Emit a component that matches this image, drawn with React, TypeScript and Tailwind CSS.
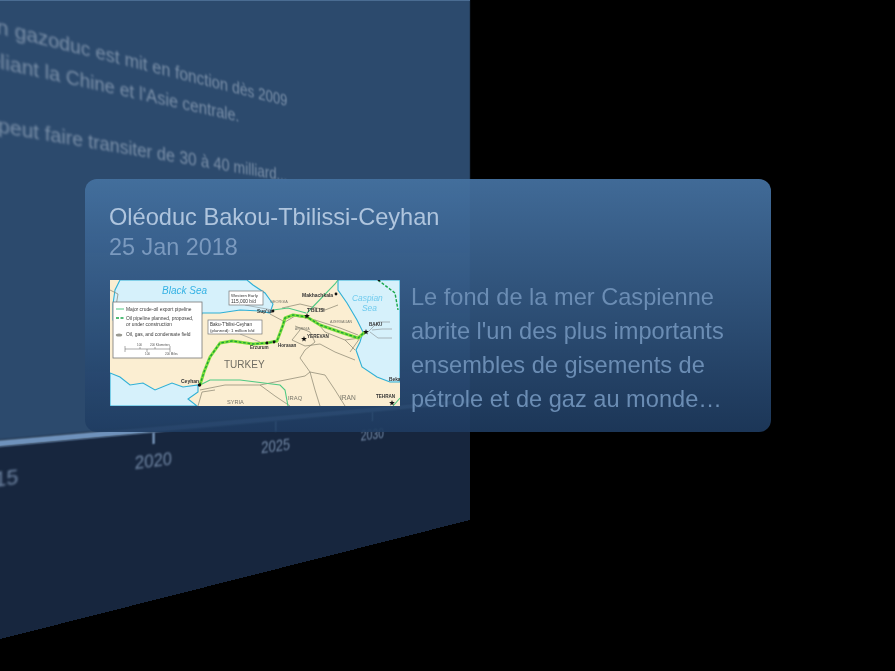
const coast = "#2fb0d6";
const border = "#86836f";

const route = "M90 105 L94 92 L100 77 L110 63 L122 61 L143 64 L157 63 L167 61 L173 45 L175 38 L183 35 L197 37 L210 45 L230 52 L248 58 L255 52";

function Star({ x, y, r = 3 }: { x: number; y: number; r?: number }) {
  const pts = Array.from({ length: 10 }, (_, i) => {
    const a = -Math.PI / 2 + (i * Math.PI) / 5;
    const d = i % 2 === 0 ? r : r * 0.42;
    return `${(x + d * Math.cos(a)).toFixed(2)},${(y + d * Math.sin(a)).toFixed(2)}`;
  }).join(" ");
  return <polygon points={pts} fill="#111" />;
}

function MapPicture() {
  const sans = "'Liberation Sans', Arial, sans-serif";
  const label = (x: number, y: number, t: string, size = 4.9, fill = "#3a3a3a", extra: Record<string, unknown> = {}) => (
    <text x={x} y={y} fontSize={size} fill={fill} fontFamily={sans} {...extra}>{t}</text>
  );
  return (
    <svg viewBox="0 0 290 126" className="block h-[126px] w-[290px] shrink-0 blur-[0.75px]">
      <rect width="290" height="126" fill="#fbeed2" />
      {/* Black Sea */}
      <path d="M10 0 L5 10 L3 24 L3 40 L90 40 L92 33 L110 33 L130 30 L150 31 L160 33 L163 24 L155 13 L143 5 L137 0 Z" fill="#d6f1fb" stroke={coast} strokeWidth="1.1" />
      {/* Mediterranean */}
      <path d="M0 93 L10 97 L20 105 L33 103 L45 110 L62 103 L73 107 L88 105 L88 112 L78 119 L87 126 L0 126 Z" fill="#d6f1fb" stroke={coast} strokeWidth="1.1" />
      {/* Caspian */}
      <path d="M228 0 L228 10 L237 23 L247 40 L253 52 L250 62 L246 70 L252 87 L267 97 L280 102 L290 102 L290 0 Z" fill="#d6f1fb" stroke={coast} strokeWidth="1.1" />
      {/* Borders */}
      <g fill="none" stroke={border} strokeWidth="0.7">
        <path d="M0 10 L8 14 L6 26" />
        <path d="M160 34 L175 42 L185 36 L196 38 L205 40 L230 48 L248 55" />
        <path d="M172 28 L190 24 L215 30 L228 25" />
        <path d="M185 46 L200 52 L205 62 L195 70 L190 78 L200 92 L205 110 L210 126" />
        <path d="M190 50 L182 60 L195 66 L210 64 L225 72 L245 80" />
        <path d="M205 40 L215 52 L235 60 L245 70" />
        <path d="M90 110 L115 105 L150 105 L175 100 L195 96 L200 92" />
        <path d="M88 126 L92 112 L105 110" />
        <path d="M150 105 L165 116 L180 126" />
        <path d="M200 92 L215 95 L225 110 L235 126" />
        <path d="M235 60 L250 58 L240 72" />
      </g>
      {/* Existing pipelines */}
      <g fill="none" stroke="#4fc983" strokeWidth="1.1">
        <path d="M90 105 L100 100 L130 100 L170 105 L175 110 L178 126" />
        <path d="M163 30 L178 28 L196 33" />
        <path d="M197 33 L225 4 L228 0" />
        <path d="M283 126 L290 118" />
      </g>
      <path d="M268 0 L285 13 L288 30" fill="none" stroke="#18a84c" strokeWidth="1.4" strokeDasharray="3 1.6" />
      {/* Planned pipeline */}
      <path d={route} fill="none" stroke="#7fe03a" strokeWidth="3" strokeLinejoin="round" />
      <path d={route} fill="none" stroke="#1a9f3a" strokeWidth="1.3" strokeDasharray="2.6 1.8" />
      {/* Places */}
      <g fill="#111">
        <circle cx="89.5" cy="105" r="1.7" />
        <circle cx="164" cy="62" r="1.4" />
        <circle cx="157" cy="63" r="1.4" />
        <circle cx="163" cy="31" r="1.4" />
        <circle cx="226" cy="14" r="1.4" />
        <circle cx="269" cy="0" r="1.4" />
      </g>
      <Star x={197} y={36} />
      <Star x={194} y={59} />
      <Star x={256} y={52} />
      <Star x={282} y={123} />
      <g fill="none" stroke="#777" strokeWidth="0.5">
        <path d="M258 52 L268 42 L280 42 M262 50 L272 49 L282 49 M260 52 L268 58 L282 58" />
        <path d="M135 25 L162 30" />
        <path d="M130 54 L150 62" />
      </g>
      {/* Sea and country names */}
      {label(52, 14, "Black Sea", 10, "#35b2e4", { fontStyle: "italic" })}
      {label(242, 21, "Caspian", 8.4, "#6fcbee", { fontStyle: "italic" })}
      {label(252, 31, "Sea", 8.4, "#6fcbee", { fontStyle: "italic" })}
      {label(114, 88, "TURKEY", 10, "#6f6d63")}
      {label(117, 124, "SYRIA", 5.6, "#77756a")}
      {label(178, 120, "IRAQ", 5.8, "#77756a")}
      {label(230, 120, "IRAN", 6.6, "#77756a")}
      {label(160, 23, "GEORGIA", 3.8, "#77756a")}
      {label(220, 43, "AZERBAIJAN", 3.6, "#77756a")}
      {label(185, 50, "ARMENIA", 3.2, "#77756a")}
      {/* Cities */}
      {label(197, 32, "T'BILISI", 4.8, "#333", { fontWeight: 700 })}
      {label(197, 58, "YEREVAN", 4.6, "#333", { fontWeight: 700 })}
      {label(259, 46, "BAKU", 4.6, "#333", { fontWeight: 700 })}
      {label(192, 17, "Makhachkala", 5, "#333", { fontWeight: 700 })}
      {label(147, 33, "Sup'sa", 4.8, "#333", { fontWeight: 700 })}
      {label(140, 69, "Erzurum", 4.6, "#333", { fontWeight: 700 })}
      {label(168, 67, "Horasan", 4.6, "#333", { fontWeight: 700 })}
      {label(71, 103, "Ceyhan", 5, "#333", { fontWeight: 700 })}
      {label(279, 101, "Beka", 4.8, "#333", { fontWeight: 700 })}
      {label(266, 118, "TEHRAN", 4.6, "#333", { fontWeight: 700 })}
      {/* Callouts */}
      <rect x="119" y="11" width="34" height="14" fill="#fff" stroke="#777" strokeWidth="0.7" />
      {label(121, 17, "Western Early", 4.3, "#333")}
      {label(121, 23, "115,000 b/d", 4.8, "#333")}
      <rect x="98" y="40" width="54" height="14" fill="#fff" stroke="#777" strokeWidth="0.7" />
      {label(100, 46, "Baku-T'bilisi-Ceyhan", 4.6, "#333")}
      {label(100, 52, "(planned): 1 million b/d", 4.4, "#333")}
      {/* Legend */}
      <rect x="3" y="22" width="89" height="56" fill="#fff" stroke="#777" strokeWidth="0.8" />
      <path d="M6 29 H14" stroke="#4fc983" strokeWidth="1" />
      <path d="M6 38 H14" stroke="#18a84c" strokeWidth="1.4" strokeDasharray="3 1.5" />
      <ellipse cx="9" cy="55" rx="3.2" ry="1.5" fill="#9a9a92" />
      {label(16, 31, "Major crude-oil export pipeline")}
      {label(16, 40, "Oil pipeline planned, proposed,")}
      {label(16, 46, "or under construction")}
      {label(16, 56, "Oil, gas, and condensate field")}
      <path d="M15 69 H60 M15 66 V72 M30 67 V69 M45 67 V69 M60 66 V72 M37 69 V72" stroke="#555" strokeWidth="0.5" fill="none" />
      {label(27, 66, "100", 3, "#555")}
      {label(40, 66, "200 Kilometers", 3, "#555")}
      {label(35, 75, "100", 3, "#555")}
      {label(55, 75, "200 Miles", 3, "#555")}
    </svg>
  );
}

function Year({ year }: { year: string }) {
  return (
    <div className="flex w-[108px] flex-col items-center">
      <div className="h-[8px] w-[2px] bg-[#6f8caf] blur-[0.4px]" />
      <div className="mt-[4px] text-[13px] leading-[16px] text-[#7288a6] blur-[0.7px]">{year}</div>
    </div>
  );
}

export default function App() {
  return (
    <div className="relative flex h-[671px] w-full items-start overflow-hidden bg-black font-['Liberation_Sans',Arial,sans-serif]">
      {/* The chart panel seen in perspective, behind the card */}
      <div className="absolute inset-0 [perspective-origin:447.5px_335px] [perspective:897px]">
        <div className="absolute left-[-50px] top-[-120px] flex h-[640px] w-[520px] origin-right flex-col [transform:rotateY(50deg)]">
          <div className="h-[519px] bg-[#2c4a6d] pl-[50px] pt-[257px] text-[13px] leading-[21px] text-[#7b90a9] blur-[0.8px]">
            <p>Un gazoduc est mit en fonction dès 2009</p>
            <p>reliant la Chine et l'Asie centrale.</p>
            <p className="mt-[18px]">Il peut faire transiter de 30 à 40 milliard...</p>
          </div>
          <div className="h-[4px] bg-[#6f92bc] blur-[0.5px]" />
          <div className="flex flex-1 bg-[#17263e] pl-[4px]">
            <Year year="2015" />
            <Year year="2020" />
            <Year year="2025" />
            <Year year="2030" />
          </div>
        </div>
      </div>
      <div className="absolute left-0 top-0 h-px w-[470px] bg-[#4a6c92]" />

      {/* Card */}
      <div className="relative ml-[85px] mt-[179px] h-[253px] w-[686px] rounded-xl bg-gradient-to-b from-[#44709f]/95 to-[#1f3c61]/90 pl-6 pt-[23px]">
        <div className="text-[23.6px] leading-[30px] text-[#afc5de]">Oléoduc Bakou-Tbilissi-Ceyhan</div>
        <div className="text-[23.4px] leading-[30px] text-[#7b9abf]">25 Jan 2018</div>
        <div className="ml-px mt-[18px] flex gap-[11px]">
          <MapPicture />
          <p className="whitespace-nowrap text-[23.6px] leading-[34px] text-[#6b8db4]">
            Le fond de la mer Caspienne
            <br />
            abrite l'un des plus importants
            <br />
            ensembles de gisements de
            <br />
            pétrole et de gaz au monde…
          </p>
        </div>
      </div>
    </div>
  );
}
